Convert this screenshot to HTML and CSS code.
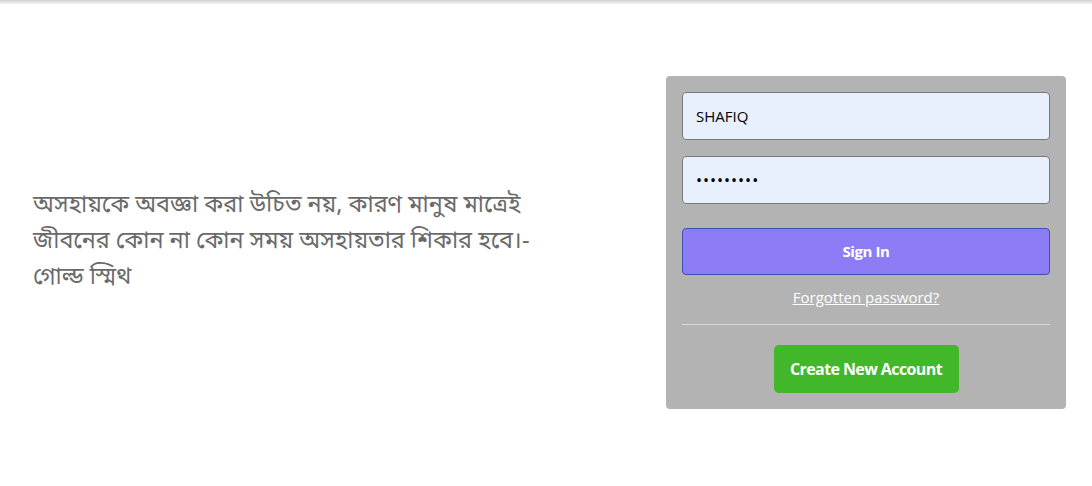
FILE: index.html
```html
<!DOCTYPE html>
<html lang="bn">
<head>
<meta charset="utf-8">
<title>Login</title>
<link rel="stylesheet" href="styles.css">
</head>
<body>
<div class="topbar"></div>
<main class="page">
  <p class="quote">অসহায়কে অবজ্ঞা করা উচিত নয়, কারণ মানুষ মাত্রেই জীবনের কোন না কোন সময় অসহায়তার শিকার হবে।- গোল্ড স্মিথ</p>
  <form class="card">
    <input class="field" type="text" value="SHAFIQ">
    <input class="field field-pass" type="password" value="123456789">
    <button class="signin" type="button">Sign In</button>
    <a class="forgot" href="#">Forgotten password?</a>
    <hr class="divider">
    <button class="create" type="button">Create New Account</button>
  </form>
</main>
</body>
</html>
```
FILE: styles.css
```css
html, body {
  margin: 0;
  padding: 0;
  background: #fff;
}
body {
  font-family: "Open Sans", "Noto Sans", sans-serif;
}
.topbar {
  height: 5px;
  background: linear-gradient(#cfcfcf, #fff);
}
.page {
  display: flex;
  justify-content: space-between;
  align-items: center;
  padding: 71px 26px 0 33px;
}
.quote {
  margin: 0;
  width: 520px;
  font-family: "Noto Sans Bengali", "Lohit Bengali", "Noto Sans", sans-serif;
  font-size: 23.4px;
  line-height: 36px;
  color: #6a6a6a;
}
.card {
  box-sizing: border-box;
  width: 400px;
  height: 333px;
  background: #b3b3b3;
  border-radius: 4px;
  padding: 16px 16px;
  display: flex;
  flex-direction: column;
  align-items: center;
}
.field {
  box-sizing: border-box;
  width: 100%;
  height: 48px;
  border: 1px solid #7a7a7a;
  border-radius: 4px;
  background: #e8f0fe;
  padding: 0 13px;
  font-family: "Open Sans", sans-serif;
  font-size: 15px;
  color: #000;
  outline: none;
}
.field-pass {
  margin-top: 16px;
  font-size: 16px;
  letter-spacing: 1px;
}
.signin {
  box-sizing: border-box;
  width: 100%;
  height: 48px;
  margin-top: 24px;
  border: 1px solid #3e4fb5;
  border-radius: 4px;
  background: #8c7cf5;
  color: #fff;
  font-family: "Open Sans", sans-serif;
  font-weight: 700;
  font-size: 15px;
  letter-spacing: -0.4px;
}
.forgot {
  margin-top: 12px;
  color: #fff;
  font-size: 15px;
  line-height: 20px;
  text-decoration: underline;
}
.divider {
  width: 100%;
  margin: 17px 0 0;
  border: 0;
  border-top: 1px solid #d9d9d9;
  height: 0;
}
.create {
  margin-top: 20px;
  height: 48px;
  width: 185px;
  border: 0;
  border-radius: 5px;
  background: #42b72a;
  color: #fff;
  font-family: "Open Sans", sans-serif;
  font-weight: 700;
  font-size: 16px;
  letter-spacing: -0.6px;
}
```
